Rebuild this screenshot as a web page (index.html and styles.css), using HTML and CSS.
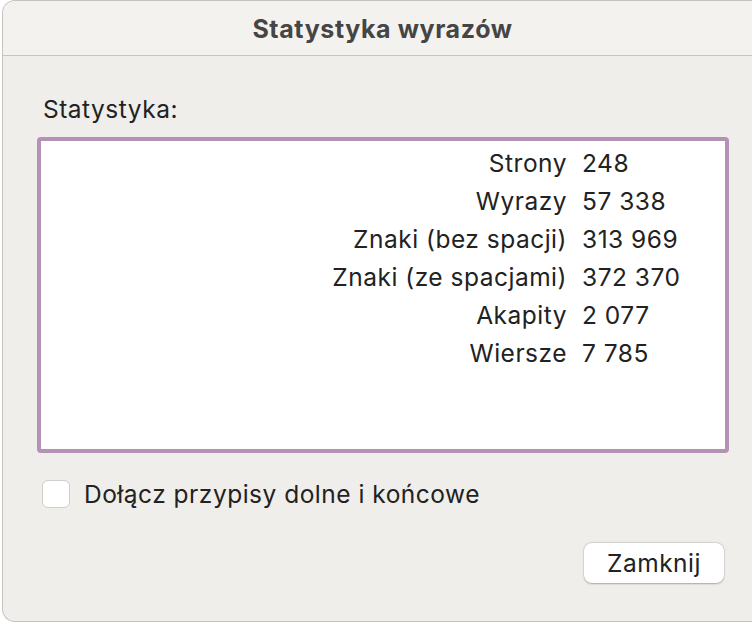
FILE: index.html
```html
<!DOCTYPE html>
<html lang="pl">
<head>
<meta charset="utf-8">
<link rel="stylesheet" href="styles.css">
</head>
<body>
<div class="window">
  <div class="titlebar">Statystyka wyrazów</div>
  <div class="content">
    <div class="label">Statystyka:</div>
    <div class="statbox">
      <div class="grid">
        <div class="k">Strony</div><div class="v">248</div>
        <div class="k">Wyrazy</div><div class="v">57 338</div>
        <div class="k">Znaki (bez spacji)</div><div class="v">313 969</div>
        <div class="k">Znaki (ze spacjami)</div><div class="v">372 370</div>
        <div class="k">Akapity</div><div class="v">2 077</div>
        <div class="k">Wiersze</div><div class="v">7 785</div>
      </div>
    </div>
    <label class="check">
      <span class="box"></span>
      <span class="check-text">Dołącz przypisy dolne i końcowe</span>
    </label>
    <div class="actions">
      <button class="btn">Zamknij</button>
    </div>
  </div>
</div>
</body>
</html>
```
FILE: styles.css
```css
html, body {
  margin: 0;
  padding: 0;
  background: #ffffff;
  overflow: hidden;
  width: 752px;
  height: 622px;
}
body {
  font-family: Inter, "Noto Sans", "Liberation Sans", sans-serif;
  color: #222222;
  font-size: 24.5px;
  letter-spacing: 0.5px;
}
.window {
  margin-left: 2px;
  width: 760px;
  height: 622px;
  box-sizing: border-box;
  background: #efeeeb;
  border: 1px solid #c4c3c0;
  border-right: none;
  border-radius: 13px 0 0 13px;
  overflow: hidden;
}
.titlebar {
  height: 53px;
  background: #f3f2ef;
  border-bottom: 1px solid #c6c5c2;
  display: flex;
  align-items: center;
  justify-content: center;
  font-weight: 700;
  font-size: 25px;
  letter-spacing: 0.6px;
  color: #454545;
  padding-top: 1px;
  box-sizing: content-box;
}
.content {
  padding: 0 0 0 34px;
}
.label {
  line-height: 28px;
  margin-top: 39px;
  padding-left: 6px;
}
.statbox {
  margin-top: 14px;
  width: 692px;
  height: 316px;
  box-sizing: border-box;
  border: 4px solid #b591b5;
  border-radius: 4px;
  background: #ffffff;
  padding-top: 3px;
}
.grid {
  display: grid;
  grid-template-columns: 526px auto;
  column-gap: 15px;
  grid-auto-rows: 38px;
  align-items: center;
}
.k { text-align: right; }
.check {
  display: flex;
  align-items: center;
  gap: 14px;
  height: 30px;
  margin-top: 26px;
  padding-left: 5px;
}
.box {
  width: 26px;
  height: 26px;
  border: 1px solid #cfcecb;
  border-radius: 6px;
  background: #ffffff;
  flex: none;
}
.actions {
  display: flex;
  justify-content: flex-start;
  padding-left: 547px;
  margin-top: 34px;
}
.btn {
  width: 140px;
  height: 40px;
  border: none;
  border-radius: 8px;
  background: #ffffff;
  box-shadow: 0 0.5px 2px rgba(0,0,0,0.28), 0 0 0 0.5px rgba(0,0,0,0.08);
  font-family: Inter, "Noto Sans", "Liberation Sans", sans-serif;
  font-size: 24.5px;
  letter-spacing: 0.5px;
  color: #222222;
  padding: 0;
}
```
